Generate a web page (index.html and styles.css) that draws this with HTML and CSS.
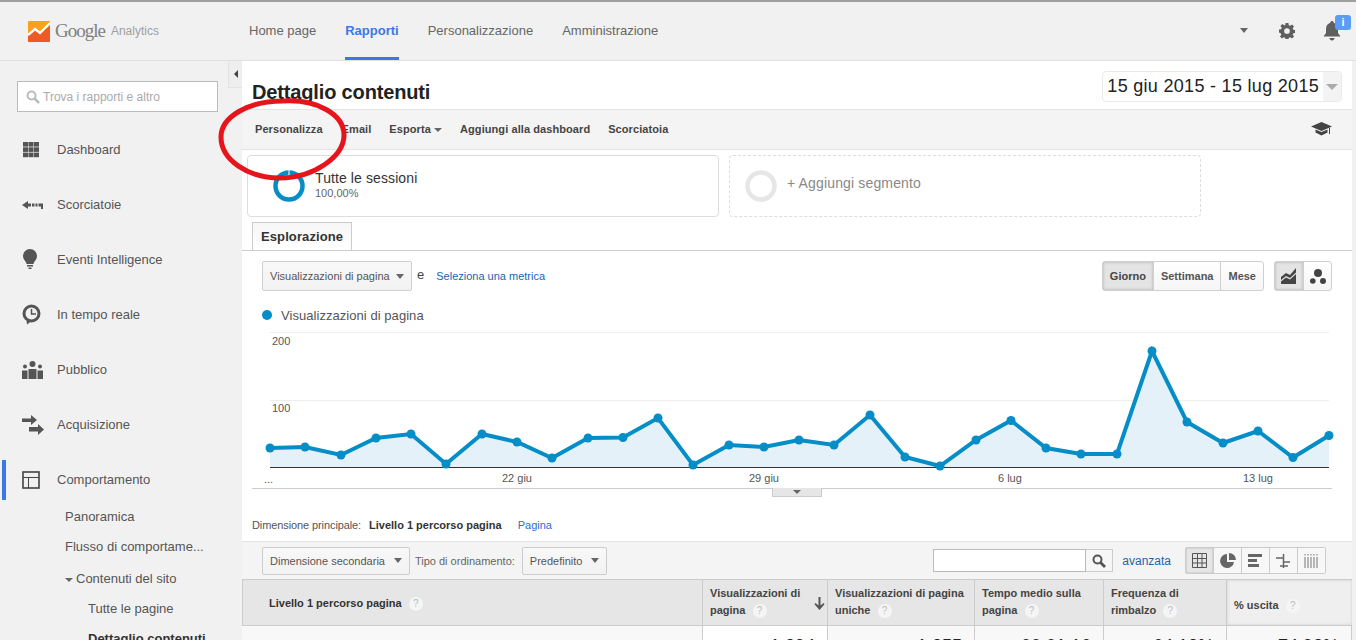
FILE: index.html
```html
<!DOCTYPE html>
<html lang="it">
  <head>
    <meta charset="UTF-8" />
    <title>Dettaglio contenuti - Google Analytics</title>
    <link rel="stylesheet" href="styles.css">
  </head>
  <body>
    <!-- Header -->
    <div class="topbar">
      <div class="logo">
        <svg width="22" height="21" viewBox="0 0 22 21"><rect width="22" height="21" rx="1" fill="#f9a11b"/><path d="M0 21V14L7 9L12 13L22 4V20a1 1 0 0 1-1 1Z" fill="#ee5a24"/><path d="M0 14L7 8L12 12L22 2" fill="none" stroke="#fff" stroke-width="2.4"/></svg>
        <span class="logo-google">Google</span>
        <span class="logo-product">Analytics</span>
      </div>
      <div class="top-links">
        <a>Home page</a>
        <a class="active">Rapporti</a>
        <a>Personalizzazione</a>
        <a>Amministrazione</a>
      </div>
      <div class="top-icons">
        <span class="caret caret-top"></span>
        <svg class="gear" width="16" height="16" viewBox="0 0 18 18"><path d="M7.400 0h3.200l.4 2.500 1.600.7 2.100-1.500 2.200 2.200-1.500 2.100.7 1.600 2.400.4v3.200l-2.400.4-.7 1.600 1.500 2.100-2.200 2.200-2.100-1.500-1.600.7-.4 2.400H7.400l-.4-2.400-1.600-.7-2.100 1.500-2.200-2.200 1.500-2.100-.7-1.600L0 10.600V7.400l2.400-.4.7-1.600L1.600 3.300l2.200-2.200 2.100 1.500L7 2.500Z M9 5.800a3.200 3.200 0 1 0 0 6.400a3.200 3.200 0 1 0 0-6.400Z" fill="#5f5f5f" fill-rule="evenodd"/></svg>
        <div class="bell">
          <svg width="18" height="20" viewBox="0 0 18 20"><path d="M9 0c1 0 1.600.7 1.700 1.700C13.500 2.500 15 5 15 8v4l2.500 3.500H.5L3 12V8c0-3 1.500-5.500 4.300-6.300C7.400.7 8 0 9 0Z M6.500 17h5c0 1.500-1 2.500-2.500 2.500S6.500 18.500 6.500 17Z" fill="#5f5f5f"/></svg>
          <span class="badge">i</span>
        </div>
      </div>
    </div>

    <div class="layout">
      <!-- Sidebar -->
      <div class="sidebar">
        <div class="collapse"><span></span></div>
        <div class="search">
          <svg width="14" height="14" viewBox="0 0 14 14"><circle cx="5.500" cy="5.500" r="4" fill="none" stroke="#bbb" stroke-width="2"/><path d="M8.500 8.500L13 13" stroke="#bbb" stroke-width="2.500"/></svg>
          Trova i rapporti e altro
        </div>
        <div class="nav-item">
          <svg class="icon-grid" width="16" height="16" viewBox="0 0 16 16" fill="#555"><rect width="5" height="4.600"/><rect x="5.500" width="5" height="4.600"/><rect x="11" width="5" height="4.600"/><rect y="5.300" width="5" height="4.600"/><rect x="5.500" y="5.300" width="5" height="4.600"/><rect x="11" y="5.300" width="5" height="4.600"/><rect y="10.600" width="5" height="4.600"/><rect x="5.500" y="10.600" width="5" height="4.600"/><rect x="11" y="10.600" width="5" height="4.600"/></svg>
          Dashboard
        </div>
        <div class="nav-item">
          <svg width="22" height="10" viewBox="0 0 22 10" fill="#555"><path d="M0 5L6 1V3.500H9V6.500H6V9Z"/><rect x="10" y="3.500" width="2.500" height="3"/><rect x="13.500" y="3.500" width="2" height="3"/><path d="M16.500 3.500H21V9H19V6.500H16.500Z"/></svg>
          Scorciatoie
        </div>
        <div class="nav-item">
          <svg width="16" height="21" viewBox="0 0 16 21" fill="#555"><path d="M8 0a7 7 0 0 1 7 7c0 3-2 4.500-3 6.500-.3.600-.5 1.500-.5 1.500h-7s-.2-.9-.5-1.500C3 11.500 1 10 1 7a7 7 0 0 1 7-7Z"/><rect x="5" y="16" width="6" height="1.500"/><rect x="6.500" y="18.500" width="3" height="1.500"/></svg>
          Eventi Intelligence
        </div>
        <div class="nav-item">
          <svg width="19" height="21" viewBox="0 0 19 21"><path d="M4.500 16.500L5 20.500L9 17.500" fill="#555"/><circle cx="9.500" cy="9.500" r="7.500" fill="#f1f1f1" stroke="#555" stroke-width="3"/><path d="M9.500 5V10H14" fill="none" stroke="#555" stroke-width="1.500"/></svg>
          In tempo reale
        </div>
        <div class="nav-item">
          <svg width="21" height="18" viewBox="0 0 21 18" fill="#555"><circle cx="10.500" cy="3" r="3"/><circle cx="3" cy="5.500" r="2"/><circle cx="18" cy="5.500" r="2"/><path d="M6.500 8h8v10h-8Z"/><path d="M0 9.500h5.500V18H0Z"/><path d="M15.500 9.500H21V18h-5.500Z"/></svg>
          Pubblico
        </div>
        <div class="nav-item">
          <svg width="22" height="21" viewBox="0 0 22 21" fill="#555"><path d="M0 4.500h9V1l6 5-6 5V8H0Z"/><path d="M7 13h9V10l6 5.500-6 5.500v-3.500H7Z"/></svg>
          Acquisizione
        </div>
        <div class="nav-item current">
          <svg width="18" height="18" viewBox="0 0 18 18" fill="none" stroke="#444" stroke-width="1.600"><rect x="1" y="1" width="16" height="16"/><path d="M1 6.500H17M6.500 6.500V17" stroke-width="1"/></svg>
          Comportamento
        </div>
        <div class="sub-item first">Panoramica</div>
        <div class="sub-item">Flusso di comportame...</div>
        <div class="sub-item open"><span class="caret caret-small"></span>Contenuti del sito</div>
        <div class="sub-item deep">Tutte le pagine</div>
        <div class="sub-item deep selected">Dettaglio contenuti</div>
      </div>

      <!-- Main content -->
      <div class="main">
        <div class="title-bar">
          <h1>Dettaglio contenuti</h1>
          <div class="date-range">
            <span>15 giu 2015 - 15 lug 2015</span>
            <div class="date-arrow"><span class="caret caret-date"></span></div>
          </div>
        </div>

        <div class="toolbar">
          <a>Personalizza</a>
          <a class="email">Email</a>
          <a>Esporta <span class="caret caret-small"></span></a>
          <a>Aggiungi alla dashboard</a>
          <a>Scorciatoia</a>
          <svg class="grad" width="21" height="14" viewBox="0 0 21 14" fill="#444"><path d="M10.500 0L21 4.500L10.500 9L0 4.500Z"/><path d="M4.500 7.500L10.500 10L16.500 7.500V10.500L10.500 13.500L4.500 10.500Z"/><path d="M18 6V12H19V5.500Z"/></svg>
        </div>

        <div class="segments">
          <div class="segment">
            <svg width="32" height="32" viewBox="0 0 32 32"><circle cx="16" cy="16" r="13.500" fill="none" stroke="#058dc7" stroke-width="4.500"/><rect x="15.500" y="0" width="1" height="5" fill="#fff"/></svg>
            <div class="segment-text">
              <div class="segment-name">Tutte le sessioni</div>
              <div class="segment-pct">100,00%</div>
            </div>
          </div>
          <div class="segment add">
            <svg width="32" height="32" viewBox="0 0 32 32"><circle cx="16" cy="16" r="13.500" fill="none" stroke="#e6e6e6" stroke-width="4.500"/></svg>
            <span>+ Aggiungi segmento</span>
          </div>
        </div>

        <div class="tabs"><div class="tab">Esplorazione</div></div>

        <div class="chart-controls">
          <div class="select">Visualizzazioni di pagina <span class="caret"></span></div>
          <span class="and">e</span>
          <a class="metric">Seleziona <span>una metrica</span></a>
          <div class="spacer"></div>
          <div class="btn-group">
            <div class="btn pressed">Giorno</div>
            <div class="btn">Settimana</div>
            <div class="btn">Mese</div>
          </div>
          <div class="btn-group chart-type">
            <div class="btn pressed">
              <svg width="16" height="16" viewBox="0 0 16 16" fill="#444"><path d="M0 9L5 5L9 7L15 0V4.500L9 10L5 8L0 12Z"/><path d="M0 16V13.500L5 9.500L9 11.500L15 6V16Z"/></svg>
            </div>
            <div class="btn">
              <svg width="16" height="15" viewBox="0 0 16 15" fill="#444"><circle cx="8" cy="4" r="4"/><circle cx="2.800" cy="12" r="2.800"/><circle cx="13" cy="12" r="3"/></svg>
            </div>
          </div>
        </div>

        <div class="legend"><span class="dot"></span>Visualizzazioni di pagina</div>

        <div class="chart">
          <svg width="1110" height="170" viewBox="0 0 1110 170">
            <path d="M28 2.500H1087M28 70.500H1087" stroke="#eee" stroke-width="1" fill="none"/>
            <path d="M28 118L63 117L99 125L134 108L169 104L204 134L240 104L275 112L310 128L346 108L381 107.500L416 88L451 135L487 115L522 117L557 110L592 115L628 85L663 127L698 136L734 110L769 90.500L804 118L839 124L875 124L910 21L945 92L981 113L1016 101L1051 127.500L1087 105.500V137H28Z" fill="#e4f1f8"/>
            <path d="M28 137.500H1087" stroke="#333" stroke-width="1.200"/>
            <path d="M10 158.500H1090" stroke="#ccc" stroke-width="1"/>
            <polyline points="28,118 63,117 99,125 134,108 169,104 204,134 240,104 275,112 310,128 346,108 381,107.500 416,88 451,135 487,115 522,117 557,110 592,115 628,85 663,127 698,136 734,110 769,90.500 804,118 839,124 875,124 910,21 945,92 981,113 1016,101 1051,127.500 1087,105.500" fill="none" stroke="#058dc7" stroke-width="4"/>
            <g fill="#058dc7">
              <circle cx="28" cy="118" r="4.500"/><circle cx="63" cy="117" r="4.500"/><circle cx="99" cy="125" r="4.500"/><circle cx="134" cy="108" r="4.500"/><circle cx="169" cy="104" r="4.500"/><circle cx="204" cy="134" r="4.500"/><circle cx="240" cy="104" r="4.500"/><circle cx="275" cy="112" r="4.500"/><circle cx="310" cy="128" r="4.500"/><circle cx="346" cy="108" r="4.500"/><circle cx="381" cy="107.500" r="4.500"/><circle cx="416" cy="88" r="4.500"/><circle cx="451" cy="135" r="4.500"/><circle cx="487" cy="115" r="4.500"/><circle cx="522" cy="117" r="4.500"/><circle cx="557" cy="110" r="4.500"/><circle cx="592" cy="115" r="4.500"/><circle cx="628" cy="85" r="4.500"/><circle cx="663" cy="127" r="4.500"/><circle cx="698" cy="136" r="4.500"/><circle cx="734" cy="110" r="4.500"/><circle cx="769" cy="90.500" r="4.500"/><circle cx="804" cy="118" r="4.500"/><circle cx="839" cy="124" r="4.500"/><circle cx="875" cy="124" r="4.500"/><circle cx="910" cy="21" r="4.500"/><circle cx="945" cy="92" r="4.500"/><circle cx="981" cy="113" r="4.500"/><circle cx="1016" cy="101" r="4.500"/><circle cx="1051" cy="127.500" r="4.500"/><circle cx="1087" cy="105.500" r="4.500"/>
            </g>
            <g class="axis">
              <text x="30" y="15">200</text>
              <text x="30" y="82">100</text>
              <text x="22" y="153">...</text>
              <text x="260" y="152">22 giu</text>
              <text x="507" y="152">29 giu</text>
              <text x="756" y="152">6 lug</text>
              <text x="1001" y="152">13 lug</text>
            </g>
          </svg>
          <div class="chart-handle"><span class="caret caret-small"></span></div>
        </div>

        <div class="dimension">
          Dimensione principale:
          <b>Livello 1 percorso pagina</b>
          <a>Pagina</a>
        </div>

        <div class="table-tools">
          <div class="select small">Dimensione secondaria <span class="caret"></span></div>
          <span class="sort-label">Tipo di ordinamento:</span>
          <div class="select small">Predefinito <span class="caret"></span></div>
          <div class="spacer"></div>
          <div class="table-search">
            <div class="table-input"></div>
            <div class="table-go">
              <svg width="14" height="14" viewBox="0 0 14 14"><circle cx="5.500" cy="5.500" r="4" fill="none" stroke="#555" stroke-width="2"/><path d="M8.500 8.500L13 13" stroke="#555" stroke-width="2.800"/></svg>
            </div>
          </div>
          <a class="advanced">avanzata</a>
          <div class="views">
            <div class="view pressed">
              <svg width="15" height="15" viewBox="0 0 15 15" fill="none" stroke="#555"><path d="M.5.500h14v14H.5ZM.5 5.500h14M.5 10h14M5.500.5v14M10 .5v14"/></svg>
            </div>
            <div class="view">
              <svg width="16" height="16" viewBox="0 0 16 16" fill="#666"><path d="M7 1a7 7 0 1 0 7 8H7Z"/><path d="M9 0a7 7 0 0 1 7 7H9Z"/></svg>
            </div>
            <div class="view">
              <svg width="15" height="14" viewBox="0 0 15 14" fill="#666"><rect width="14" height="3"/><rect y="5" width="9" height="3"/><rect y="10" width="11" height="3"/></svg>
            </div>
            <div class="view">
              <svg width="15" height="14" viewBox="0 0 15 14" fill="none" stroke="#666" stroke-width="1.500"><path d="M7.500 0V14M0 4H7.500M7.500 8H14M4 12H12"/></svg>
            </div>
            <div class="view">
              <svg width="15" height="14" viewBox="0 0 15 14" fill="none" stroke="#777"><path d="M1 0V1.500M4 0V1.500M7 0V1.500M10 0V1.500M13 0V1.500M1 3V14M4 3V14M7 3V14M10 3V14M13 3V14"/></svg>
            </div>
          </div>
        </div>

        <div class="table">
          <div class="cell head first-col">Livello 1 percorso pagina <i class="help">?</i></div>
          <div class="cell head sorted">Visualizzazioni di pagina <i class="help">?</i>
            <svg class="sort-arrow" width="11" height="13" viewBox="0 0 11 13"><path d="M4.500 0h2v8.500L9.500 6l1 1.200L5.500 13 .5 7.200 1.500 6l3 2.500Z" fill="#555"/></svg>
          </div>
          <div class="cell head">Visualizzazioni di pagina uniche <i class="help">?</i></div>
          <div class="cell head">Tempo medio sulla pagina <i class="help">?</i></div>
          <div class="cell head">Frequenza di rimbalzo <i class="help">?</i></div>
          <div class="cell head exit">% uscita <i class="help">?</i></div>

          <div class="cell total first-col"></div>
          <div class="cell total active-col">1.394</div>
          <div class="cell total">1.255</div>
          <div class="cell total">00:01:16</div>
          <div class="cell total">64,13%</div>
          <div class="cell total">74,93%</div>
        </div>
      </div>
    </div>

    <!-- Hand-drawn annotation over the page -->
    <svg class="scribble" width="140" height="100" viewBox="0 0 140 100">
      <path d="M65 6C100 4 126 20 126 40C126 62 95 83 62 83C30 83 3 65 3 42C3 22 30 6 65 6" fill="none" stroke="#e8141c" stroke-width="5"/>
    </svg>
  </body>
</html>
```

FILE: styles.css
```css
/* General Styles */
html,
body {
  margin: 0;
  padding: 0;
  height: 640px;
  overflow: hidden;
}

body {
  font-family: "Liberation Sans", Arial, sans-serif;
  font-size: 13px;
  color: #444;
  background-color: #f1f1f1;
  border-top: 2px solid #a0a0a0;
  box-sizing: border-box;
  position: relative;
}

.spacer {
  flex: 1;
}

.caret {
  display: inline-block;
  width: 0;
  height: 0;
  border-left: 4px solid transparent;
  border-right: 4px solid transparent;
  border-top: 5px solid #666;
}

.caret-small {
  border-top-width: 4px;
  vertical-align: middle;
}

/* Top bar */
.topbar {
  display: flex;
  align-items: center;
  height: 58px;
  border-bottom: 1px solid #e0e0e0;
}

.logo {
  display: flex;
  align-items: center;
  width: 249px;
  padding-left: 28px;
  box-sizing: border-box;
  height: 100%;
}

.logo-google {
  font-family: "Liberation Serif", serif;
  font-size: 19px;
  letter-spacing: -1px;
  color: #808080;
  margin-left: 5px;
}

.logo-product {
  font-size: 12px;
  color: #a0a0a0;
  margin-left: 6px;
}

.top-links {
  display: flex;
  height: 100%;
  gap: 29px;
}

.top-links a {
  display: flex;
  align-items: center;
  color: #666;
  box-sizing: border-box;
  border-bottom: 3px solid transparent;
  padding-top: 1px;
}

.top-links a.active {
  color: #3a78e7;
  font-weight: bold;
  border-bottom-color: #3a78e7;
}

.top-icons {
  margin-left: auto;
  display: flex;
  align-items: center;
  padding-right: 15px;
}

.caret-top {
  margin-right: 31px;
  margin-top: -1px;
}

.bell {
  position: relative;
  margin-left: 28px;
  height: 20px;
}

.badge {
  position: absolute;
  top: -6px;
  left: 12px;
  width: 16px;
  height: 15px;
  line-height: 15px;
  text-align: center;
  border-radius: 3px;
  background-color: #5b9cf5;
  color: white;
  font-size: 11px;
  font-weight: bold;
}

.layout {
  display: flex;
  height: 579px;
}

/* Sidebar */
.sidebar {
  width: 242px;
  flex-shrink: 0;
  position: relative;
  overflow: hidden;
}

.collapse {
  position: absolute;
  top: 0;
  right: 0;
  width: 13px;
  height: 26px;
  border: 1px solid #e3e3e3;
  border-top: none;
  border-right: none;
  background-color: #eee;
  display: flex;
  align-items: center;
  justify-content: center;
}

.collapse span {
  width: 0;
  height: 0;
  border-top: 4px solid transparent;
  border-bottom: 4px solid transparent;
  border-right: 4px solid #444;
}

.search {
  display: flex;
  align-items: center;
  gap: 3px;
  width: 201px;
  height: 31px;
  box-sizing: border-box;
  margin: 20px 0 10px 17px;
  padding-left: 8px;
  border: 1px solid #bbb;
  background-color: white;
  color: #aaa;
  font-size: 12px;
}

.nav-item {
  display: flex;
  align-items: center;
  height: 55px;
  padding-left: 57px;
  color: #555;
  position: relative;
}

.nav-item svg {
  position: absolute;
  left: 22px;
}

.nav-item .icon-grid {
  left: 23px;
}

.nav-item.current::before {
  content: "";
  position: absolute;
  left: 2px;
  top: 8px;
  width: 4px;
  height: 40px;
  background-color: #3a78e7;
}

.sub-item {
  color: #555;
  padding-left: 65px;
  height: 30px;
  line-height: 30px;
  white-space: nowrap;
}

.sub-item.first {
  margin-top: -5px;
}

.sub-item.open {
  height: 32px;
  line-height: 34px;
}

.sub-item.open .caret {
  margin-right: 3px;
}

.sub-item.deep {
  padding-left: 88px;
}

.sub-item.selected {
  color: #333;
  font-weight: bold;
}

/* Main content */
.main {
  width: 1110px;
  flex-shrink: 0;
  background-color: white;
  overflow: hidden;
}

.title-bar {
  display: flex;
  justify-content: space-between;
  height: 48px;
  border-bottom: 1px solid #e4e4e4;
}

h1 {
  margin: 20px 0 0 10px;
  font-size: 20px;
  line-height: 23px;
  color: #222;
  letter-spacing: -0.15px;
}

.date-range {
  display: flex;
  align-items: center;
  height: 29px;
  margin: 10px 10px 0 0;
  border: 1px solid #eaeaea;
  border-radius: 4px;
  font-size: 18px;
  color: #222;
  padding-left: 4px;
  letter-spacing: 0.3px;
}

.date-arrow {
  width: 18px;
  height: 100%;
  margin-left: 4px;
  background-color: #f3f3f3;
  display: flex;
  align-items: center;
  justify-content: center;
}

.caret-date {
  border-left-width: 6px;
  border-right-width: 6px;
  border-top-width: 6px;
  border-top-color: #aaa;
}

.toolbar {
  display: flex;
  align-items: center;
  gap: 18px;
  height: 40px;
  padding: 0 0 2px 13px;
  box-sizing: border-box;
  background-color: #f4f4f4;
  border-bottom: 1px solid #e4e4e4;
  font-size: 11px;
  font-weight: bold;
  color: #444;
  letter-spacing: 0.08px;
}

.toolbar .email {
  margin-left: 1px;
}

.toolbar .grad {
  margin-left: auto;
  margin-right: 20px;
}

.segments {
  display: flex;
  gap: 10px;
  padding: 5px 0 0 5px;
  height: 72px;
  box-sizing: border-box;
}

.segment {
  display: flex;
  align-items: center;
  width: 472px;
  height: 62px;
  box-sizing: border-box;
  border: 1px solid #ddd;
  border-radius: 4px;
  padding-left: 25px;
  gap: 10px;
}

.segment.add {
  border: 1px dashed #ddd;
  color: #888;
  font-size: 14px;
  padding-left: 15px;
  letter-spacing: 0.15px;
}

.segment.add span {
  margin-top: -6px;
}

.segment-text {
  margin-top: -4px;
}

.segment-name {
  font-size: 14px;
  color: #333;
  letter-spacing: 0.1px;
}

.segment-pct {
  font-size: 11px;
  color: #666;
  margin-top: 1px;
}

.tabs {
  height: 28px;
  padding-left: 10px;
  border-bottom: 1px solid #ccc;
}

.tab {
  display: inline-block;
  height: 28px;
  line-height: 28px;
  box-sizing: border-box;
  padding: 0 8px;
  width: 100px;
  border: 1px solid #ccc;
  border-bottom: none;
  background: linear-gradient(#f6f6f6, white);
  font-weight: bold;
  color: #333;
  letter-spacing: 0.1px;
}

.chart-controls {
  display: flex;
  align-items: center;
  height: 30px;
  margin-top: 10px;
  padding-left: 20px;
  padding-right: 20px;
}

.select {
  display: inline-flex;
  align-items: center;
  justify-content: space-between;
  box-sizing: border-box;
  height: 30px;
  padding: 0 7px;
  width: 150px;
  border: 1px solid #d0d0d0;
  border-radius: 2px;
  background: linear-gradient(#f8f8f8, #f2f2f2);
  font-size: 11px;
  color: #555;
}

.and {
  margin: -3px 0 0 5px;
}

.metric {
  margin-left: 12px;
  font-size: 11px;
  color: #1a66b0;
}

.btn-group {
  display: flex;
  height: 30px;
  border: 1px solid #d0d0d0;
  border-radius: 3px;
  box-sizing: border-box;
  background: linear-gradient(white, #f5f5f5);
  font-size: 11px;
  font-weight: bold;
  color: #555;
}

.btn {
  display: flex;
  align-items: center;
  justify-content: center;
  padding: 0 7px;
  border-left: 1px solid #d0d0d0;
}

.btn:first-child {
  border-left: none;
}

.btn.pressed {
  background-color: #e4e4e4;
  box-shadow: inset 0 0 3px #aaa;
  color: #444;
}

.chart-type {
  margin-left: 10px;
}

.chart-type .btn {
  width: 28px;
  box-sizing: border-box;
  padding: 0;
}

.legend {
  display: flex;
  align-items: center;
  height: 16px;
  margin-top: 16px;
  padding-left: 20px;
  color: #555;
  letter-spacing: 0.05px;
}

.dot {
  width: 10px;
  height: 10px;
  border-radius: 50%;
  background-color: #058dc7;
  margin-right: 9px;
}

.chart {
  position: relative;
  height: 184px;
  margin-top: 7px;
}

.chart svg {
  display: block;
}

.axis text {
  font-family: "Liberation Sans", Arial, sans-serif;
  font-size: 11px;
  fill: #555;
}

.chart-handle {
  position: absolute;
  left: 530px;
  top: 158px;
  width: 50px;
  height: 9px;
  background-color: #e6e6e6;
  border: 1px solid #ccc;
  border-top: none;
  box-sizing: border-box;
  text-align: center;
  line-height: 5px;
}

.dimension {
  height: 17px;
  padding-left: 10px;
  margin-top: 5px;
  font-size: 11px;
  color: #555;
  letter-spacing: -0.1px;
}

.dimension b {
  color: #333;
  margin-left: 5px;
  letter-spacing: 0;
}

.dimension a {
  color: #2a6ed8;
  margin-left: 13px;
  letter-spacing: 0;
}

.table-tools {
  display: flex;
  align-items: center;
  height: 37px;
  margin-top: 5px;
  padding: 0 26px 0 20px;
  background-color: #f4f4f4;
  border-top: 1px solid #e4e4e4;
  font-size: 11px;
}

.select.small {
  width: auto;
  height: 28px;
  gap: 9px;
  border-color: #ccc;
  color: #555;
}

.sort-label {
  margin: 0 7px 0 5px;
  color: #666;
}

.table-search {
  display: flex;
  height: 23px;
}

.table-input {
  width: 153px;
  background-color: white;
  border: 1px solid #bbb;
  box-sizing: border-box;
}

.table-go {
  width: 27px;
  display: flex;
  align-items: center;
  justify-content: center;
  border: 1px solid #ccc;
  border-left: none;
  box-sizing: border-box;
  background-color: #f6f6f6;
}

.advanced {
  color: #1a66b0;
  margin: 0 14px 0 9px;
  font-size: 12px;
}

.views {
  display: flex;
  height: 25px;
  border: 1px solid #ccc;
  border-radius: 2px;
}

.view {
  width: 27px;
  display: flex;
  align-items: center;
  justify-content: center;
  border-left: 1px solid #ccc;
  background-color: #f7f7f7;
}

.view:first-child {
  border-left: none;
}

.view.pressed {
  background-color: #e6e6e6;
  box-shadow: inset 0 0 2px #aaa;
}

.table {
  display: grid;
  grid-template-columns: 461px 125px 147px 129px 123px 125px;
  grid-template-rows: 46px 40px;
  border-top: 1px solid #ccc;
}

.cell {
  box-sizing: border-box;
  font-size: 11px;
  border-right: 1px solid #ccc;
  position: relative;
}

.head {
  padding: 5px 6px 0 7px;
  line-height: 17px;
  background-color: #e6e6e6;
  border-bottom: 1px solid #ccc;
  font-weight: bold;
  color: #444;
}

.head.first-col {
  padding: 15px 0 0 26px;
  border-left: 1px solid #ccc;
  color: #333;
}

.head.sorted {
  padding-right: 20px;
}

.sort-arrow {
  position: absolute;
  right: 2px;
  top: 17px;
}

.head.exit {
  padding: 17px 0 0 7px;
  background-color: #efefef;
  box-shadow: inset 0 0 3px #ccc;
  border-right: none;
}

.help {
  display: inline-block;
  width: 14px;
  height: 14px;
  line-height: 14px;
  margin-left: 4px;
  border-radius: 50%;
  background-color: #f5f5f5;
  color: #bbb;
  font-size: 10px;
  font-style: normal;
  font-weight: normal;
  text-align: center;
}

.total {
  text-align: right;
  padding: 10px 12px 0 0;
  font-size: 18px;
  color: #222;
  background-color: #f8f8f8;
}

.total.active-col {
  background-color: white;
}

/* Red annotation */
.scribble {
  position: absolute;
  left: 218px;
  top: 93px;
}
```
